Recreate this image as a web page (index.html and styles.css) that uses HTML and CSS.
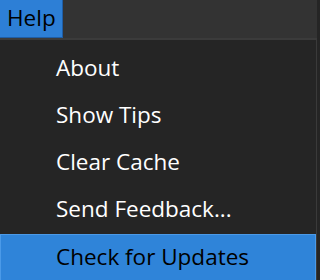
FILE: index.html
```html
<!DOCTYPE html>
<html>
<head>
<meta charset="utf-8">
<link rel="stylesheet" href="styles.css">
</head>
<body>
<div class="menubar">
  <div class="menubar-item active">Help</div>
</div>
<div class="popup">
  <div class="item">About</div>
  <div class="item">Show Tips</div>
  <div class="item">Clear Cache</div>
  <div class="item">Send Feedback...</div>
  <div class="item selected">Check for Updates</div>
</div>
</body>
</html>
```
FILE: styles.css
```css
html, body {
  margin: 0;
  padding: 0;
  background: #252525;
  width: 317px;
  height: 280px;
  overflow: hidden;
  font-family: "Open Sans", "Noto Sans", sans-serif;
}
.menubar {
  display: flex;
  height: 38px;
  background: #333333;
  border-bottom: 2px solid #3b3b3b;
}
.menubar-item {
  box-sizing: border-box;
  height: 38px;
  width: 63px;
  padding-left: 7px;
  font-size: 22.5px;
  line-height: 36px;
  color: #000;
}
.menubar-item.active {
  background: #2d7fd6;
  border-right: 1px solid #1f5ea6;
  border-bottom: 1px solid #1f5ea6;
}
.popup {
  box-sizing: border-box;
  height: 240px;
  border-right: 1px solid #3a3a3a;
  padding-top: 6px;
  background: #252525;
}
.item {
  box-sizing: border-box;
  height: 47px;
  padding-left: 56px;
  font-size: 22.5px;
  line-height: 43px;
  color: #ffffff;
}
.item.selected {
  background: #2f84d9;
  border: 1px solid #4b9ae8;
  padding-left: 55px;
  color: #000;
  height: 48px;
}
```
